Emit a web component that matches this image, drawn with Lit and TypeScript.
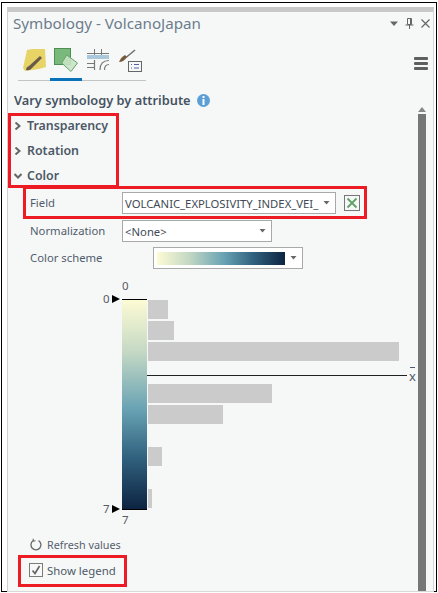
import { LitElement, html, css, svg } from "lit";
import { customElement } from "lit/decorators.js";

const caret = svg`<svg class="caret" width="7" height="4" viewBox="0 0 7 4"><path d="M.5 0h6L3.5 3.5z" fill="#666"/></svg>`;

@customElement("app-root")
export class AppRoot extends LitElement {
  static styles = css`
    :host { display: block; width: 438px; height: 593px; overflow: hidden; background: #fff; font-family: "Noto Sans", "Open Sans", sans-serif; color: #4f5a68; font-size: 12px; }
    * { box-sizing: border-box; }
    svg { display: block; flex: none; }
    .frame { position: relative; margin: 2px 0 0 1px; width: 436px; height: 590px; border: 1px solid #000; padding: 4px 2px 0 5px; }
    .panel { height: 585px; border-top: 5px solid #c9c9c9; border-left: 1px solid #d0d0d0; border-right: 1px solid #d8d8d8; border-bottom: 1px solid #d8d8d8; background: #f6f8f8; display: flex; flex-direction: column; }
    .titlebar { height: 22px; flex: none; display: flex; align-items: center; justify-content: space-between; padding: 0 3px 0 5px; }
    .title { font-size: 15.2px; color: #6d7c8c; line-height: 22px; }
    .winbtns { display: flex; align-items: center; gap: 7px; }
    .tabsrow { height: 48px; flex: none; display: flex; align-items: flex-start; justify-content: space-between; padding: 0 5px 0 10px; }
    .tabs { width: 128px; height: 47px; border-bottom: 1px solid #c4c4c4; display: flex; position: relative; padding: 14px 0 0 5px; gap: 8px; }
    .tabind { position: absolute; left: 32px; bottom: -1px; width: 32px; height: 3px; background: #0a72b8; }
    .burger { margin-top: 23px; width: 14px; height: 13px; display: flex; flex-direction: column; justify-content: space-between; }
    .burger i { display: block; height: 3px; background: #5f5f5f; border-radius: 1px; }
    .body { flex: 1; display: flex; min-height: 0; }
    .main { flex: 1; min-width: 0; padding: 8px 0 0 6px; }
    .sb { width: 8px; margin: 19px 7px 0 0; flex: none; position: relative; display: flex; flex-direction: column; align-items: center; }
    .sbarrow { margin-top: 6px; margin-bottom: 2px; }
    .thumb { flex: 1; width: 8px; background: #767676; }
    .heading { height: 20px; display: flex; align-items: center; gap: 6px; font-weight: 600; font-size: 12.8px; color: #465362; }
    .sections { margin-top: 3px; }
    .sec { height: 25px; display: flex; align-items: center; font-weight: 600; font-size: 12.4px; color: #4c5866; }
    .sec svg { margin: 0 6px 0 0; width: 7px; }
    .sec.open svg { margin-right: 5px; width: 8px; }
    .row { display: flex; align-items: center; padding-left: 16px; position: relative; }
    .lbl { width: 92px; padding-bottom: 2px; font-size: 11.3px; color: #515c6b; flex: none; }
    .combo { height: 22px; border: 1px solid #a9a9a9; background: #fff; display: flex; align-items: center; justify-content: space-between; padding: 0 3px 0 2px; font-size: 11.3px; color: #414a55; white-space: nowrap; overflow: hidden; }
    .combo .caret { margin-right: 2px; }
    .r-field { margin-top: 4px; height: 22px; }
    .r-norm { margin-top: 6px; height: 22px; }
    .r-scheme { margin-top: 5px; height: 22px; }
    .w-field { width: 214px; }
    .w-norm { width: 150px; }
    .w-scheme { width: 150px; margin-left: 31px; padding-left: 3px; }
    .xbtn { margin-left: 8px; width: 16px; height: 16px; border: 1px solid #777; display: flex; align-items: center; justify-content: center; }
    .grad { width: 128px; height: 13px; background: linear-gradient(90deg, #fdfbd4 0%, #c4d8c4 25%, #69a3b4 52%, #31627f 75%, #0c2442 100%); }
    .legend { position: relative; margin-top: 10px; height: 255px; }
    .lnum { position: absolute; font-size: 11.5px; line-height: 14px; color: #5a5a62; }
    .ramp { position: absolute; left: 108px; top: 20px; width: 25px; height: 211px; border-top: 1px solid #000; border-bottom: 1px solid #000; background: linear-gradient(180deg, #fdfbd4 0%, #c4d8c4 25%, #69a3b4 52%, #31627f 75%, #0c2442 100%); }
    .tri { position: absolute; left: 98px; width: 0; height: 0; border-left: 8px solid #000; border-top: 4px solid transparent; border-bottom: 4px solid transparent; }
    .bars { position: absolute; left: 134px; top: 21px; display: flex; flex-direction: column; gap: 2px; }
    .bar { height: 19px; background: #cbcbcb; }
    .gap { height: 19px; }
    .axis { position: absolute; left: 133px; top: 96px; width: 260px; height: 1px; background: #222; }
    .xbar { position: absolute; left: 395px; top: 89px; font-size: 13px; line-height: 16px; color: #4e5a68; }
    .xbar::before { content: ""; position: absolute; left: 1px; top: -1px; width: 5px; height: 1px; background: #4e5a68; }
    .refresh { padding-left: 16px; height: 20px; display: flex; align-items: center; gap: 5px; font-size: 10.8px; color: #56606d; }
    .check { margin-top: 6px; padding-left: 15px; height: 20px; display: flex; align-items: center; gap: 4px; font-size: 11.4px; color: #4d5866; }
    .box { width: 14px; height: 14px; border: 1px solid #7b7b7b; background: #f8f8f8; display: flex; align-items: center; justify-content: center; }
    .red { position: absolute; border: 3px solid #ed1c24; pointer-events: none; }
    .red1 { left: 6px; top: 110px; width: 111px; height: 75px; }
    .red2 { left: 21px; top: 183px; width: 344px; height: 33px; }
    .red3 { left: 16px; top: 552px; width: 109px; height: 32px; }
  `;

  render() {
    const bars = [20, 26, 251];
    const chev = html`<svg height="8" viewBox="0 0 7 8"><path d="M1.5 .5L5.5 4l-4 3.5" fill="none" stroke="#666" stroke-width="2"/></svg>`;
    return html`
      <div class="frame">
        <div class="panel">
          <div class="titlebar">
            <span class="title">Symbology - VolcanoJapan</span>
            <div class="winbtns">
              <svg width="8" height="5" viewBox="0 0 8 5"><path d="M0 0.5h8L4 5z" fill="#666"/></svg>
              <svg width="9" height="11" viewBox="0 0 9 11"><path d="M2.5 .5h4v6h-4zM.5 7h8M4.5 7v4M5.5 1v5" fill="none" stroke="#666"/></svg>
              <svg width="9" height="9" viewBox="0 0 9 9"><path d="M.5 .5l8 8M8.5 .5l-8 8" stroke="#666" stroke-width="1.2"/></svg>
            </div>
          </div>
          <div class="tabsrow">
            <div class="tabs">
              <svg width="23" height="24" viewBox="0 0 23 24">
                <path d="M4 2 L9 1 L22 1 L23 19 L16 21 L2 23 L0 20 Z" fill="#e8d466"/>
                <path d="M3 22 Q3 19 6 18 L17 8 L19 10 L9 20 Q7 23 3 22Z" fill="#6a5a4a"/>
              </svg>
              <svg width="25" height="24" viewBox="0 0 25 24">
                <rect x=".5" y=".5" width="16" height="16" fill="#79ba7c" stroke="#4b8f52"/>
                <path d="M12.7 7 L23.5 15 L17 23.5 L7.7 15 Z" fill="#c7e3c4" fill-opacity=".9" stroke="#6aa06c"/>
              </svg>
              <svg width="23" height="24" viewBox="0 0 23 24" fill="none" stroke="#777">
                <path d="M7.5 1v6M14.5 1v6M0 5.5h22"/>
                <path d="M0 9h22" stroke="#a9c8dc" stroke-width="4"/>
                <path d="M0 15.5h7.5M0 19.5h7.5M7.5 12v10M22 12.5Q13 12.5 13 22M22 16.5Q17.5 16.5 17.5 22" stroke-width="1.2"/>
              </svg>
              <svg width="25" height="24" viewBox="0 0 25 24">
                <path d="M17 2L8 9.5" stroke="#6c6c6c" stroke-width="1.5"/>
                <path d="M9 9L7 7Q3 9 1 14Q6 14 9 9Z" fill="#7a5a3c"/>
                <rect x="10.5" y="13.5" width="13" height="10" fill="#f6f8f8" stroke="#666"/>
                <path d="M13 16.5h1M16 16.5h5M13 20h1M16 20h5" stroke="#5a5ea8"/>
              </svg>
              <div class="tabind"></div>
            </div>
            <div class="burger"><i></i><i></i><i></i></div>
          </div>
          <div class="body">
            <div class="main">
              <div class="heading">
                <span>Vary symbology by attribute</span>
                <svg width="13" height="13" viewBox="0 0 13 13"><circle cx="6.5" cy="6.5" r="6.5" fill="#5b9fd6"/><rect x="5.5" y="2" width="2" height="2" fill="#fff"/><rect x="5.5" y="5" width="2" height="6" fill="#fff"/></svg>
              </div>
              <div class="sections">
                <div class="sec">${chev}Transparency</div>
                <div class="sec">${chev}Rotation</div>
                <div class="sec open"><svg height="6" viewBox="0 0 8 6"><path d="M.5 1L4 4.5 7.5 1" fill="none" stroke="#666" stroke-width="2"/></svg>Color</div>
              </div>
              <div class="row r-field">
                <span class="lbl">Field</span>
                <div class="combo w-field"><span>VOLCANIC_EXPLOSIVITY_INDEX_VEI_</span>${caret}</div>
                <div class="xbtn"><svg width="12" height="12" viewBox="0 0 12 12"><path d="M1.5 1.5l9 9M10.5 1.5l-9 9" stroke="#5fa266" stroke-width="1.8"/></svg></div>
              </div>
              <div class="row r-norm">
                <span class="lbl">Normalization</span>
                <div class="combo w-norm"><span>&lt;None&gt;</span>${caret}</div>
              </div>
              <div class="row r-scheme">
                <span class="lbl">Color scheme</span>
                <div class="combo w-scheme"><div class="grad"></div>${caret}</div>
              </div>
              <div class="legend">
                <span class="lnum" style="left:108px;top:0">0</span>
                <span class="lnum" style="left:89px;top:13px">0</span>
                <span class="tri" style="top:16px"></span>
                <div class="ramp"></div>
                <div class="bars">
                  ${bars.map((w) => html`<div class="bar" style="width:${w}px"></div>`)}
                  <div class="gap"></div>
                  <div class="bar" style="width:124px"></div>
                  <div class="bar" style="width:75px"></div>
                  <div class="gap"></div>
                  <div class="bar" style="width:14px"></div>
                  <div class="gap"></div>
                  <div class="bar" style="width:4px"></div>
                </div>
                <div class="axis"></div>
                <span class="xbar">x</span>
                <span class="lnum" style="left:89px;top:223px">7</span>
                <span class="tri" style="top:226px"></span>
                <span class="lnum" style="left:108px;top:234px">7</span>
              </div>
              <div class="refresh">
                <svg width="12" height="13" viewBox="0 0 12 13" fill="none" stroke="#666" stroke-width="1.3"><path d="M8.6 2.6A5 5 0 1 1 3 2.8"/><path d="M3.2 .8l.1 2.4 2.2-.4" stroke-width="1.1"/></svg>
                <span>Refresh values</span>
              </div>
              <div class="check">
                <div class="box"><svg width="10" height="10" viewBox="0 0 10 10"><path d="M1.5 5.5L4 8.5 8.5 1" fill="none" stroke="#666" stroke-width="1.7"/></svg></div>
                <span>Show legend</span>
              </div>
            </div>
            <div class="sb">
              <svg class="sbarrow" width="8" height="5" viewBox="0 0 8 5"><path d="M4 0l4 5H0z" fill="#888"/></svg>
              <div class="thumb"></div>
            </div>
          </div>
        </div>
        <div class="red red1"></div>
        <div class="red red2"></div>
        <div class="red red3"></div>
      </div>
    `;
  }
}
